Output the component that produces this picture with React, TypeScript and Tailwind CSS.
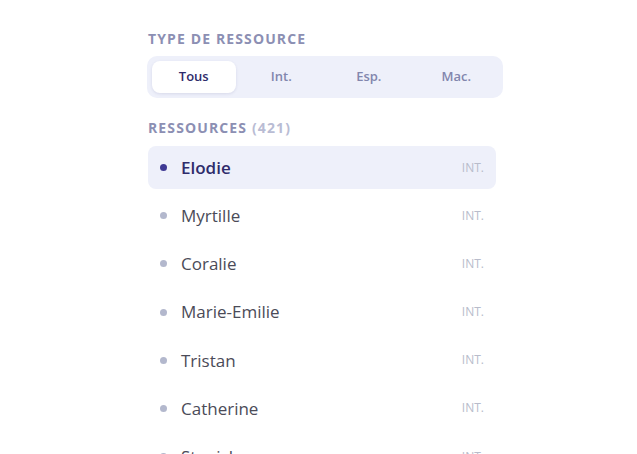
import { useState } from 'react'

const types = ['Tous', 'Int.', 'Esp.', 'Mac.']

const resources = [
  { name: 'Elodie', kind: 'INT.' },
  { name: 'Myrtille', kind: 'INT.' },
  { name: 'Coralie', kind: 'INT.' },
  { name: 'Marie-Emilie', kind: 'INT.' },
  { name: 'Tristan', kind: 'INT.' },
  { name: 'Catherine', kind: 'INT.' },
  { name: 'Stanislas', kind: 'INT.' },
]

export default function App() {
  const [type, setType] = useState('Tous')
  const [selected, setSelected] = useState('Elodie')

  return (
    <div className="h-[454px] w-full overflow-hidden bg-white font-['Open_Sans',sans-serif]">
      <div className="ml-[147px] w-[356px] pt-[31px]">
        <h2 className="pl-px text-[14px] font-bold uppercase leading-4 tracking-[0.08em] text-[#8c8fb3]">
          Type de ressource
        </h2>

        {/* segmented filter */}
        <div className="mt-[9px] grid grid-cols-4 gap-1 rounded-[10px] bg-[#eef0fa] p-[5px]">
          {types.map((t) => (
            <button
              key={t}
              onClick={() => setType(t)}
              className={
                t === type
                  ? 'h-8 rounded-lg bg-white text-[13px] font-semibold text-[#2e2b6b] shadow-[0_1px_3px_rgba(60,60,120,0.12)]'
                  : 'h-8 rounded-lg text-[13px] font-semibold text-[#8286ad]'
              }
            >
              {t}
            </button>
          ))}
        </div>

        <h2 className="mt-[22px] pl-px text-[14px] font-bold uppercase leading-4 tracking-[0.08em] text-[#8c8fb3]">
          Ressources <span className="text-[#b9bcd4]">(421)</span>
        </h2>

        <ul className="mt-[10px] w-[349px] pl-px">
          {resources.map((r) => {
            const active = r.name === selected
            return (
              <li
                key={r.name}
                onClick={() => setSelected(r.name)}
                className={
                  active
                    ? 'mb-[5.2px] flex h-[43px] cursor-pointer items-center rounded-lg bg-[#eef0fa] pl-3 pr-3'
                    : 'mb-[5.2px] flex h-[43px] cursor-pointer items-center rounded-lg pl-3 pr-3'
                }
              >
                <span
                  className={
                    active
                      ? 'h-[7px] w-[7px] shrink-0 rounded-full bg-[#3f3a94]'
                      : 'h-[7px] w-[7px] shrink-0 rounded-full bg-[#b3b8cd]'
                  }
                />
                <span
                  className={
                    active
                      ? 'ml-[14px] flex-1 text-[17px] font-semibold text-[#2e2b6b]'
                      : 'ml-[14px] flex-1 text-[17px] text-[#4b4b58]'
                  }
                >
                  {r.name}
                </span>
                <span className="text-[12px] font-medium text-[#b8bccb]">{r.kind}</span>
              </li>
            )
          })}
        </ul>
      </div>
    </div>
  )
}
